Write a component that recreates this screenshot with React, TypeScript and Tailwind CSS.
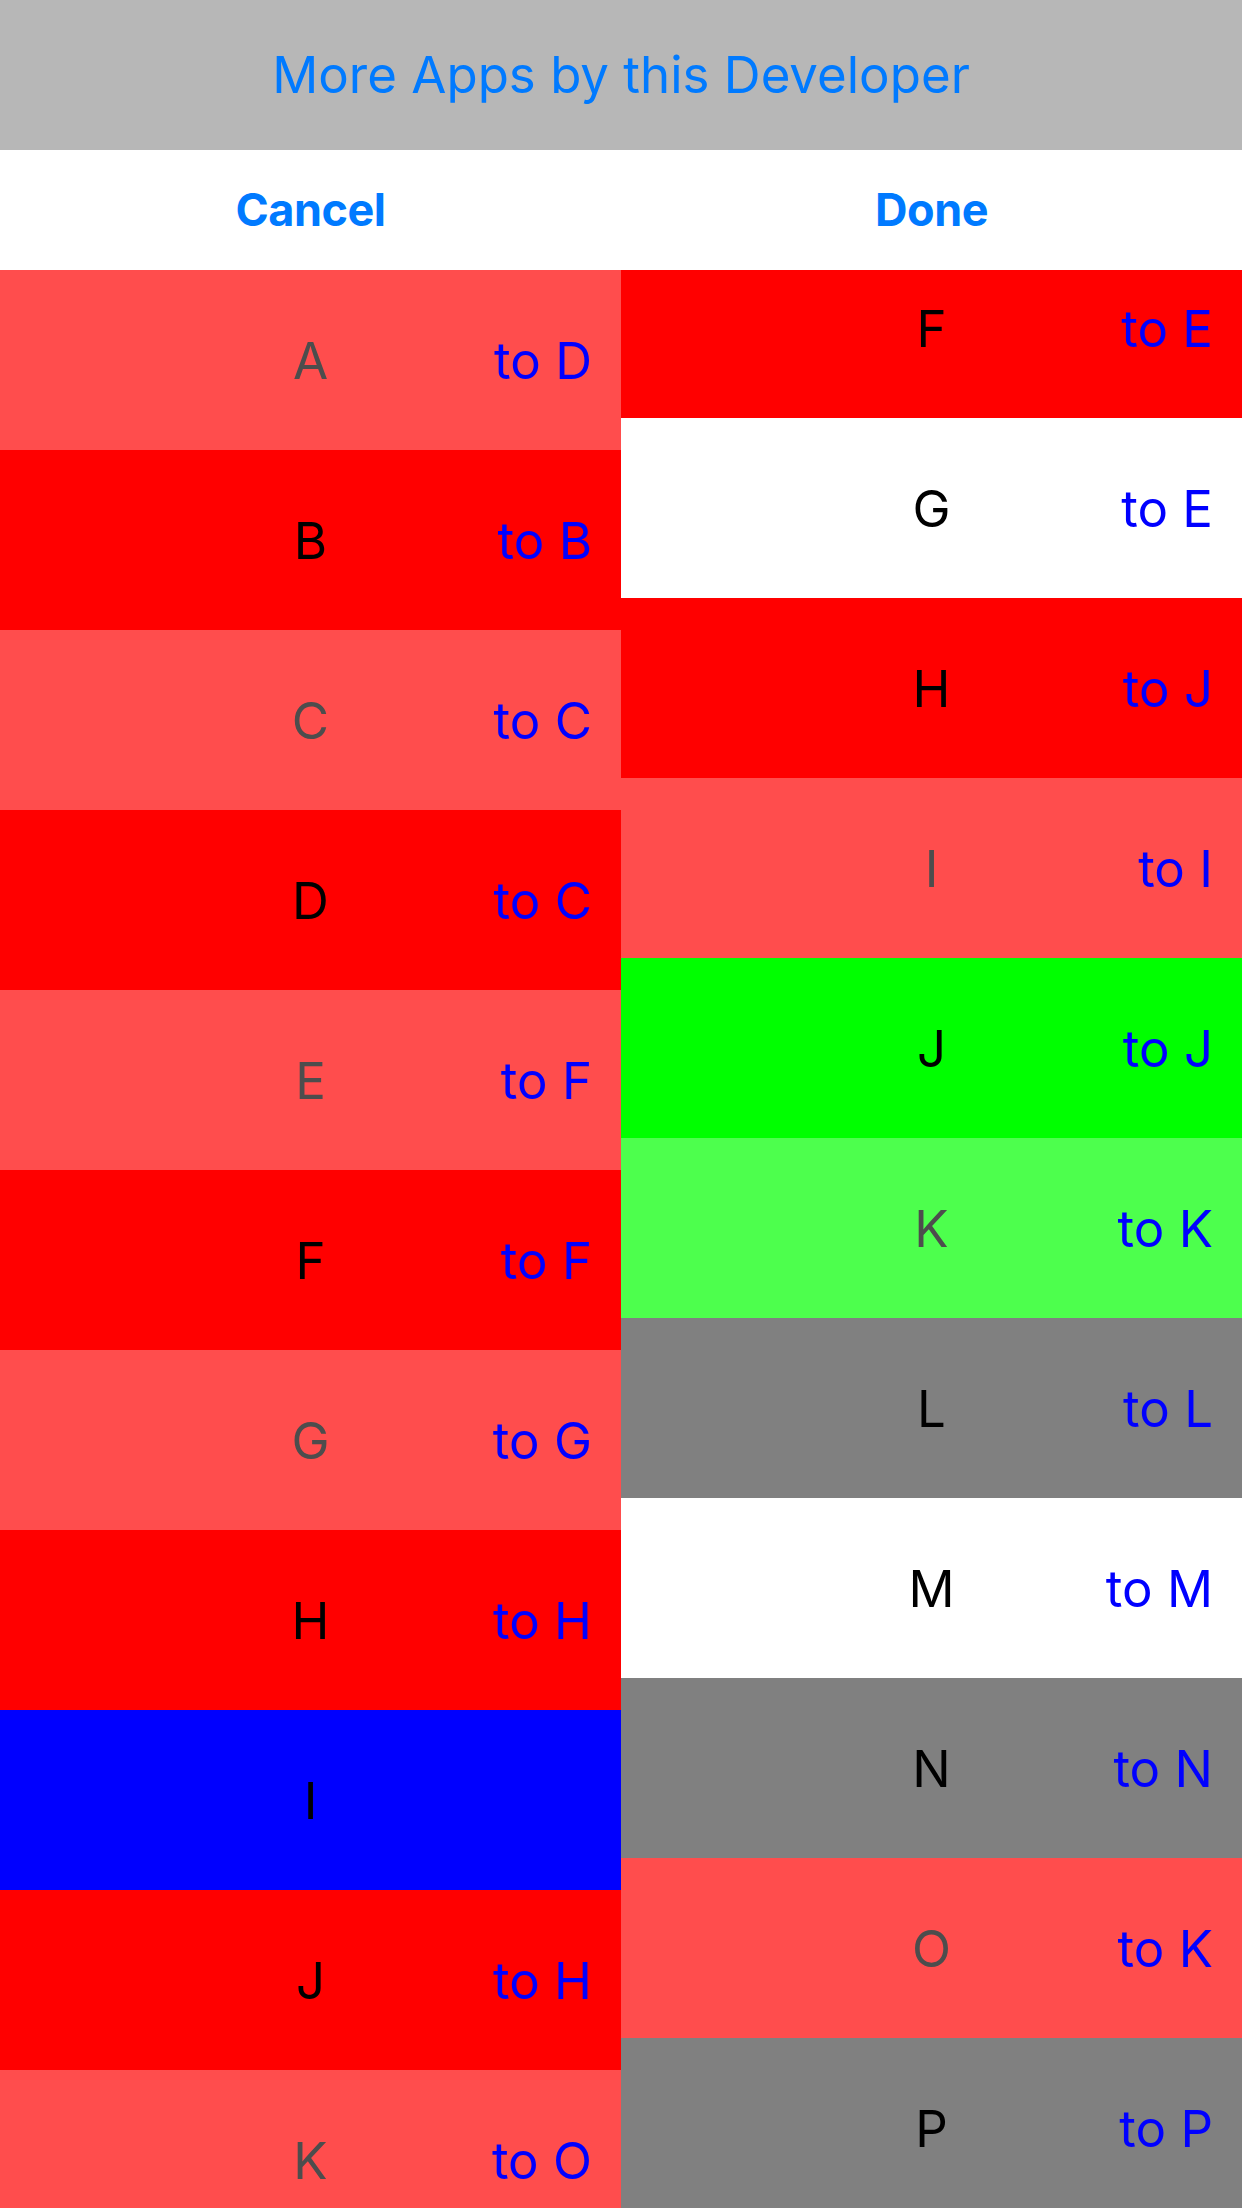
import React from "react";

type Row = { letter: string; target?: string; tone: "light" | "red" | "white" | "green" | "lightGreen" | "gray" | "blue" };

const leftRows: Row[] = [
  { letter: "A", target: "D", tone: "light" },
  { letter: "B", target: "B", tone: "red" },
  { letter: "C", target: "C", tone: "light" },
  { letter: "D", target: "C", tone: "red" },
  { letter: "E", target: "F", tone: "light" },
  { letter: "F", target: "F", tone: "red" },
  { letter: "G", target: "G", tone: "light" },
  { letter: "H", target: "H", tone: "red" },
  { letter: "I", tone: "blue" },
  { letter: "J", target: "H", tone: "red" },
  { letter: "K", target: "O", tone: "light" },
];

const rightRows: Row[] = [
  { letter: "F", target: "E", tone: "red" },
  { letter: "G", target: "E", tone: "white" },
  { letter: "H", target: "J", tone: "red" },
  { letter: "I", target: "I", tone: "light" },
  { letter: "J", target: "J", tone: "green" },
  { letter: "K", target: "K", tone: "lightGreen" },
  { letter: "L", target: "L", tone: "gray" },
  { letter: "M", target: "M", tone: "white" },
  { letter: "N", target: "N", tone: "gray" },
  { letter: "O", target: "K", tone: "light" },
  { letter: "P", target: "P", tone: "gray" },
];

const toneClass: Record<Row["tone"], string> = {
  light: "bg-[#ff4d4d] text-[#4d4d4d]",
  red: "bg-[#ff0000] text-black",
  white: "bg-white text-black",
  green: "bg-[#00ff00] text-black",
  lightGreen: "bg-[#4dff4d] text-[#4d4d4d]",
  gray: "bg-[#808080] text-black",
  blue: "bg-[#0000ff] text-black",
};

const LetterRow = ({ row }: { row: Row }) => (
  <div
    className={`h-[180px] shrink-0 grid grid-cols-[1fr_auto_1fr] items-center px-[29px] ${toneClass[row.tone]}`}
  >
    <span />
    <span className="leading-none">{row.letter}</span>
    {row.target ? (
      <span className="justify-self-end leading-none text-[#0000ff]">to {row.target}</span>
    ) : (
      <span />
    )}
  </div>
);

export default function App() {
  return (
    <div
      className="w-[1242px] h-[2208px] overflow-hidden flex flex-col bg-white text-[51px]"
      style={{ fontFamily: "Inter, 'Liberation Sans', sans-serif" }}
    >
      <div className="h-[150px] shrink-0 bg-[#b7b7b7] flex items-center justify-center text-[#007aff]">
        More Apps by this Developer
      </div>
      <div className="h-[120px] shrink-0 grid grid-cols-2 items-center text-[#007aff] font-bold text-[45px] tracking-[-0.5px]">
        <button type="button" className="text-center">Cancel</button>
        <button type="button" className="text-center">Done</button>
      </div>
      <div className="flex-1 grid grid-cols-2 overflow-hidden">
        <div className="flex flex-col overflow-hidden">
          {leftRows.map((row, i) => (
            <LetterRow key={i} row={row} />
          ))}
        </div>
        <div className="flex flex-col overflow-hidden">
          <div className="flex flex-col -mt-[32px]">
            {rightRows.map((row, i) => (
              <LetterRow key={i} row={row} />
            ))}
          </div>
        </div>
      </div>
    </div>
  );
}
